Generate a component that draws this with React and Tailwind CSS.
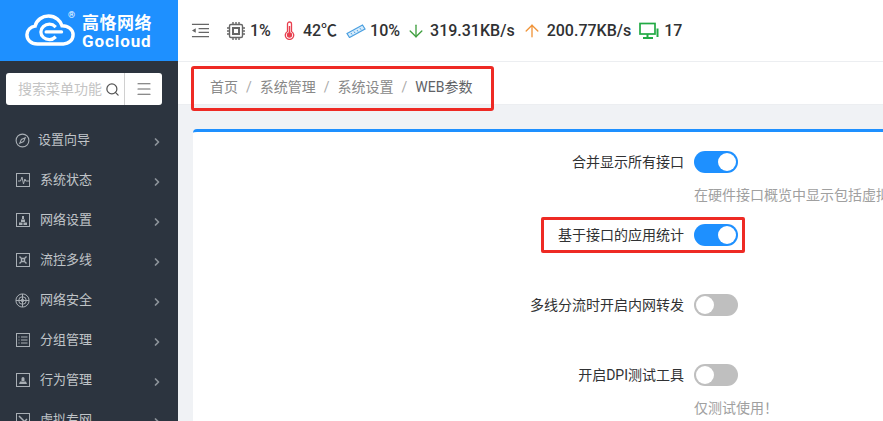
import { ChevronRight, Search, Menu, ArrowDown, ArrowUp } from "lucide-react";

const font = { fontFamily: '"Roboto", "Noto Sans CJK SC", sans-serif' };

const menuItems = [
  { label: "设置向导", icon: "compass" },
  { label: "系统状态", icon: "pulse" },
  { label: "网络设置", icon: "network" },
  { label: "流控多线", icon: "flow" },
  { label: "网络安全", icon: "globe" },
  { label: "分组管理", icon: "list" },
  { label: "行为管理", icon: "behavior" },
  { label: "虚拟专网", icon: "vpn" },
];

function MenuIcon({ name }) {
  if (name === "compass") {
    return (
      <svg width="15" height="15" viewBox="0 0 15 15" fill="none" stroke="#a9afb5" strokeWidth="1.1">
        <circle cx="7.5" cy="7.5" r="6.4" />
        <path d="M10.2 4.8 8.6 8.6 4.8 10.2 6.4 6.4Z" />
      </svg>
    );
  }
  const inner = {
    pulse: <path d="M2 8h2.5l1.5-4 1.5 7 1.4-5 .8 2H13" />,
    network: <path d="M6 3h2v3H6zM5 6.500h4V9H5zM3 9.500h3.500V12H3zM7.500 9.500H11V12H7.500z" fill="#a9afb5" stroke="none" />,
    flow: <path d="M3.500 3.500 6 6M10.500 3.500 8 6M3.500 10.500 6 8M10.500 10.500 8 8M5.500 5.500h3v3h-3z" strokeWidth="1.400" />,
    list: <path d="M2.500 4h1M2.500 7h1M2.500 10h1M5 4h6.500M5 7h6.500M5 10h6.500" />,
    behavior: <path d="M5.500 5.500a1.500 1.500 0 1 1 3 0V8h-3zM4 8.500h6l1 2.500H3z" fill="#a9afb5" stroke="none" />,
    vpn: <path d="M3 3l5 5M6 11l5-5" strokeWidth="1.500" />,
  };
  if (name === "globe") {
    return (
      <svg width="15" height="15" viewBox="0 0 15 15" fill="none" stroke="#a9afb5" strokeWidth="1">
        <circle cx="7.500" cy="7.500" r="6.600" />
        <circle cx="7.500" cy="7.500" r="3.800" />
        <circle cx="7.500" cy="7.500" r="1.300" fill="#a9afb5" />
        <path d="M1 7.500h13M7.500 1v13" />
      </svg>
    );
  }
  return (
    <svg width="14" height="14" viewBox="0 0 14 14" fill="none" stroke="#a9afb5" strokeWidth="1" className="overflow-visible">
      <rect x="0.500" y="0.500" width="13" height="13" />
      {inner[name]}
    </svg>
  );
}

function Sidebar() {
  return (
    <aside className="flex w-[178px] shrink-0 flex-col bg-[#2c343f]">
      <div className="flex h-[61px] shrink-0 items-center bg-[#1e90ff] pl-[25px] text-white">
        <svg width="50" height="34" viewBox="0 0 52 35" fill="none" className="mb-[2px] shrink-0">
          <path
            d="M13 32C6 32 2 27.500 2 22.500 2 17.500 6 14 10.500 13.500 12 7 18 3 24.500 3 32 3 37 8 38.500 13 45 13 50 17 50 22.500 50 28 45.500 32 40 32Z"
            stroke="#fff"
            strokeWidth="3.600"
          />
          <path d="M32 14.500C30 12.500 28 11.500 25.500 11.500 20.500 11.500 16.500 15 16.500 19.500 16.500 24 20.500 27.500 25.500 27.500 28 27.500 30 26.500 32 24.500" stroke="#fff" strokeWidth="3.400" />
          <path d="M22 19.500H38" stroke="#fff" strokeWidth="3.400" strokeLinecap="round" />
        </svg>
        <div className="relative ml-[7px] mt-[1px] flex flex-col">
          <span className="absolute left-[-14px] top-[-3px] text-[9px] leading-[10px]">®</span>
          <span className="text-[17px] font-bold leading-[20px] tracking-[0.5px]">高恪网络</span>
          <span className="text-[17px] font-bold leading-[17px] tracking-[0.9px]">Gocloud</span>
        </div>
      </div>

      <div className="ml-[6px] mr-[16px] mt-[12px] flex h-[32px] shrink-0 items-center rounded-[3px] bg-white">
        <span className="w-[96px] shrink-0 whitespace-nowrap pl-[12px] text-[14px] text-[#c4c4c4]">搜索菜单功能</span>
        <Search size={15} strokeWidth={2} className="ml-[3px] shrink-0 text-[#555]" />
        <div className="ml-[4px] flex h-full flex-1 items-center justify-center border-l border-[#d0d0d0]">
          <Menu size={18} strokeWidth={1.5} className="text-[#666]" />
        </div>
      </div>

      <nav className="mt-[15px] flex flex-col">
        {menuItems.map((item) => (
          <div key={item.label} className="flex h-[40px] shrink-0 items-center pl-[15px] pr-[15px] text-[13px] text-[#c0c4c8]">
            <span className="flex w-[15px] justify-center">
              <MenuIcon name={item.icon} />
            </span>
            <span className={item.icon === "compass" ? "ml-[8px]" : "ml-[10px]"}>{item.label}</span>
            <ChevronRight size={12} strokeWidth={3.5} className="ml-auto mt-[3px] text-[#8d939a]" />
          </div>
        ))}
      </nav>
    </aside>
  );
}

function Stat({ icon, text, className }) {
  return (
    <div className={`flex items-center ${className}`}>
      {icon}
      <span>{text}</span>
    </div>
  );
}

function TopBar() {
  return (
    <header className="flex h-[61px] shrink-0 items-center bg-white pl-[13px] text-[16px] font-medium text-[#303133]">
      <svg width="18" height="15" viewBox="0 0 19 15" fill="none" stroke="#666" strokeWidth="1.500">
        <path d="M1 1h18M8 5.500h11M8 9.500h11M1 14h18" />
        <path d="M5 5v5L1 7.500Z" fill="#666" stroke="none" />
      </svg>
      <Stat
        className="ml-[17px] gap-[4px]"
        text="1%"
        icon={
          <svg width="20" height="20" viewBox="0 0 20 20" fill="none" stroke="#666" strokeWidth="1.400">
            <rect x="3.500" y="3.500" width="13" height="13" rx="1.500" />
            <rect x="7" y="7" width="6" height="6" strokeWidth="2" />
            <path d="M7 1v2.500M10 1v2.500M13 1v2.500M7 16.500V19M10 16.500V19M13 16.500V19M1 7h2.500M1 10h2.500M1 13h2.500M16.500 7H19M16.500 10H19M16.500 13H19" />
          </svg>
        }
      />
      <Stat
        className="ml-[13px] gap-[8px]"
        text="42℃"
        icon={
          <svg width="11" height="19" viewBox="0 0 11 19" fill="none" stroke="#e8404f" strokeWidth="1.300">
            <path d="M3.500 10.500V3a2 2 0 0 1 4 0v7.500a4.200 4.200 0 1 1-4 0Z" />
            <circle cx="5.500" cy="14" r="2" fill="#e8404f" />
            <path d="M5.500 5v8" strokeWidth="1.500" />
          </svg>
        }
      />
      <Stat
        className="ml-[9px] gap-[4px]"
        text="10%"
        icon={
          <svg width="20" height="14" viewBox="0 0 20 14" fill="#d8ecfb" stroke="#4a9fe0" strokeWidth="1.200">
            <path d="M1 9.500 16.500 1 19 5 3.500 13.500Z" />
            <path d="M5 9l1 1.500M8 7.500l1 1.500M11 6l1 1.500M14 4.200l1 1.500" strokeWidth="1" />
          </svg>
        }
      />
      <Stat className="ml-[6px] gap-[4px]" text="319.31KB/s" icon={<ArrowDown size={20} strokeWidth={1.6} className="text-[#3f9f3f]" />} />
      <Stat className="ml-[7px] gap-[5px]" text="200.77KB/s" icon={<ArrowUp size={20} strokeWidth={1.6} className="text-[#f0953a]" />} />
      <Stat
        className="ml-[8px] gap-[5px]"
        text="17"
        icon={
          <svg width="20" height="18" viewBox="0 0 20 18" fill="none" stroke="#22aa44" strokeWidth="1.700">
            <rect x="1" y="1.500" width="15" height="10.500" />
            <path d="M8.500 12v3M4 16h10" strokeWidth="2" />
            <path d="M17.500 6.500h2V15h-2z" fill="#22aa44" stroke="none" />
          </svg>
        }
      />
    </header>
  );
}

function Toggle({ on }) {
  return (
    <div className={`flex h-[22px] w-[44px] shrink-0 items-center rounded-full p-[2px] ${on ? "justify-end bg-[#1e90ff]" : "justify-start bg-[#bfbfbf]"}`}>
      <div className="h-[18px] w-[18px] rounded-full bg-white" />
    </div>
  );
}

function FormRow({ label, on, help, className, outlined }) {
  return (
    <div className={className}>
      <div className="relative flex h-[22px] items-center">
        <label className="w-[501px] shrink-0 pr-[10px] text-right text-[14px] text-[#303133]">{label}</label>
        <Toggle on={on} />
        {outlined && <div className="absolute left-[348px] top-[-7px] h-[36px] w-[204px] rounded-[2px] border-[3px] border-[#ee2a24]" />}
      </div>
      {help && <p className="ml-[501px] mt-[13px] whitespace-nowrap text-[14px] leading-[18px] text-[#a0a0a0]">{help}</p>}
    </div>
  );
}

export default function App() {
  return (
    <div className="flex h-[421px] w-[883px] overflow-hidden bg-[#f0f2f5]" style={font}>
      <Sidebar />
      <main className="flex min-w-0 flex-1 flex-col">
        <TopBar />
        <div className="relative flex h-[44px] shrink-0 items-center border-y border-[#eceef1] bg-white pl-[32px] pt-[8px] text-[14px] text-[#888]">
          <span>首页</span>
          <span className="mx-[8px] text-[#aaa]">/</span>
          <span>系统管理</span>
          <span className="mx-[8px] text-[#aaa]">/</span>
          <span>系统设置</span>
          <span className="mx-[8px] text-[#aaa]">/</span>
          <span className="text-[#606266]">WEB参数</span>
          <div className="absolute left-[13px] top-[4px] h-[45px] w-[303px] rounded-[3px] border-[3px] border-[#ee2a24]" />
        </div>
        <section className="ml-[15px] mt-[24px] flex-1 overflow-hidden rounded-tl-[4px] border-t-[3px] border-[#1e90ff] bg-white pt-[19px]">
          <FormRow label="合并显示所有接口" on help="在硬件接口概览中显示包括虚拟接口的所有接口" />
          <FormRow label="基于接口的应用统计" on outlined className="mt-[20px]" />
          <FormRow label="多线分流时开启内网转发" on={false} className="mt-[48px]" />
          <FormRow label="开启DPI测试工具" on={false} help="仅测试使用！" className="mt-[48px]" />
        </section>
      </main>
    </div>
  );
}
